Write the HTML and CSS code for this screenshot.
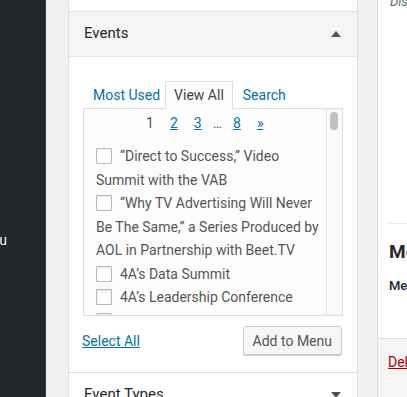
FILE: index.html
```html
<!DOCTYPE html>
<html>
<head>
  <title>Menus - Events</title>
  <link rel="stylesheet" href="styles.css">
</head>
<body>
  <div class="screen">
    <div class="adminmenu">
      <div class="menu-item">Menu</div>
    </div>

    <div class="side-column">
      <div class="accordion">
        <div class="section prev-section"></div>

        <div class="section open">
          <div class="section-title">
            <span>Events</span>
            <span class="arrow up"></span>
          </div>
          <div class="section-content">
            <ul class="tabs">
              <li class="tab"><a href="#">Most Used</a></li>
              <li class="tab active">View All</li>
              <li class="tab"><a href="#">Search</a></li>
            </ul>
            <div class="tabs-panel">
              <div class="panel-scroll">
                <div class="pagination">
                  <span class="current">1</span>
                  <a href="#">2</a>
                  <a href="#">3</a>
                  <span class="dots">…</span>
                  <a href="#">8</a>
                  <a href="#">»</a>
                </div>
                <ul class="checklist">
                  <li><span class="checkbox"></span>“Direct to Success,” Video Summit with the VAB</li>
                  <li><span class="checkbox"></span>“Why TV Advertising Will Never Be The Same,” a Series Produced by AOL in Partnership with Beet.TV</li>
                  <li><span class="checkbox"></span>4A’s Data Summit</li>
                  <li><span class="checkbox"></span>4A’s Leadership Conference</li>
                  <li><span class="checkbox"></span>4A’s Strategy Festival</li>
                </ul>
              </div>
              <div class="scrollbar"><div class="thumb"></div></div>
            </div>
            <div class="button-controls">
              <a href="#" class="select-all">Select All</a>
              <button class="button">Add to Menu</button>
            </div>
          </div>
        </div>

        <div class="section">
          <div class="section-title">
            <span>Event Types</span>
            <span class="arrow down"></span>
          </div>
        </div>
      </div>
    </div>

    <div class="main-column">
      <div class="menu-edit">
        <div class="edit-top">
          <div class="drag-hint">Dis</div>
        </div>
        <div class="menu-settings">
          <h3>Me</h3>
          <div class="settings-row">Me</div>
        </div>
        <div class="edit-footer">
          <a href="#" class="delete">Delete Menu</a>
        </div>
      </div>
    </div>
  </div>
</body>
</html>
```

FILE: styles.css
```css
body {
  margin: 0;
  background-color: #f1f1f1;
  font-family: Roboto, "Noto Sans", sans-serif;
  font-size: 14px;
  color: #444;
}

.screen {
  display: flex;
  height: 397px;
  overflow: hidden;
}

a {
  color: #0073aa;
}

/* admin sidebar */
.adminmenu {
  width: 45px;
  flex-shrink: 0;
  background-color: #23282d;
  border-right: 1px solid #32373c;
  overflow: hidden;
}

.menu-item {
  width: 80px;
  margin-left: -73px;
  margin-top: 232px;
  text-align: right;
  color: #eee;
  font-size: 14px;
}

/* left column with accordion */
.side-column {
  width: 290px;
  flex-shrink: 0;
  margin-left: 22px;
}

.accordion {
  border-left: 1px solid #ddd;
  border-right: 1px solid #ddd;
  background-color: #fff;
}

.section {
  border-bottom: 1px solid #ddd;
}

.prev-section {
  height: 11px;
  background-color: #fff;
}

.section-title {
  display: flex;
  align-items: center;
  justify-content: space-between;
  height: 44px;
  padding: 0 16px 0 15px;
  font-size: 15px;
  color: #23282d;
  background-color: #f5f5f5;
}

.open .section-title {
  border-bottom: 1px solid #e5e5e5;
}

.section-title span:first-child {
  margin-top: -3px;
}

.section:last-child .section-title {
  background-color: #fff;
}

.arrow {
  width: 0;
  height: 0;
  border-left: 5px solid transparent;
  border-right: 5px solid transparent;
}

.arrow.up {
  border-bottom: 6px solid #555;
}

.arrow.down {
  border-top: 6px solid #555;
}

.section-content {
  padding: 24px 14px 17px 14px;
}

/* tabs */
.tabs {
  display: flex;
  list-style: none;
  margin: 0;
  padding: 0;
}

.tab {
  padding: 4px 9px 4px 9px;
  font-size: 14px;
  line-height: 18px;
  border: 1px solid transparent;
  border-bottom: none;
}

.tab a {
  text-decoration: none;
}

.tab:first-child {
  padding-right: 4px;
}

.tab.active {
  background-color: #fdfdfd;
  border-color: #ddd;
  color: #444;
  margin-bottom: -1px;
  position: relative;
  z-index: 1;
  padding: 4px 8px 5px 8px;
}

.tabs-panel {
  display: flex;
  height: 206px;
  border: 1px solid #ddd;
  background-color: #fdfdfd;
  overflow: hidden;
}

.panel-scroll {
  flex: 1;
  padding: 6px 7px 0 12px;
}

.pagination {
  display: flex;
  gap: 16px;
  font-size: 14px;
  margin-bottom: 14px;
  padding-left: 50px;
}

.pagination .current,
.pagination .dots {
  color: #555;
}

.pagination .dots {
  margin: 0 -5px;
}

.checklist {
  list-style: none;
  margin: 0;
  padding: 0;
}

.checklist li {
  font-size: 14px;
  line-height: 23.5px;
  color: #555;
}

.checkbox {
  display: inline-block;
  width: 14px;
  height: 14px;
  border: 1px solid #b4b9be;
  border-radius: 1px;
  background-color: #fff;
  box-shadow: inset 0 1px 2px rgba(0, 0, 0, 0.1);
  vertical-align: -3px;
  margin-right: 8px;
}

.scrollbar {
  width: 15px;
  border-left: 1px solid #e8e8e8;
  background-color: #fafafa;
}

.thumb {
  width: 8px;
  height: 18px;
  margin: 3px 0 0 3px;
  border-radius: 4px;
  background-color: #c1c1c1;
}

.button-controls {
  display: flex;
  justify-content: space-between;
  align-items: center;
  margin-top: 10px;
}

.select-all {
  font-size: 14px;
  margin-left: -1px;
}

.button {
  font-family: inherit;
  font-size: 14px;
  color: #555;
  height: 29px;
  padding: 0 9px;
  background-color: #f7f7f7;
  border: 1px solid #ccc;
  border-radius: 3px;
  box-shadow: 0 1px 0 #ccc;
  margin-right: 1px;
}

/* right column */
.main-column {
  flex: 1;
  margin-left: 19px;
  min-width: 0;
}

.menu-edit {
  height: 397px;
  display: flex;
  flex-direction: column;
  border-left: 1px solid #ddd;
  background-color: #fff;
  white-space: nowrap;
}

.edit-top {
  height: 223px;
  border-bottom: 1px solid #eee;
  margin-left: 10px;
}

.drag-hint {
  font-style: italic;
  font-size: 13px;
  color: #666;
  margin-top: -6px;
  margin-left: 2px;
}

.menu-settings {
  flex: 1;
  padding-left: 11px;
}

.menu-settings h3 {
  margin: 16px 0 0 0;
  font-size: 19px;
  color: #23282d;
}

.settings-row {
  margin-top: 15px;
  font-size: 13px;
  font-weight: 500;
  color: #23282d;
}

.edit-footer {
  height: 43px;
  border-top: 1px solid #ddd;
  background-color: #f5f5f5;
  padding: 15px 0 0 10px;
}

.delete {
  color: #a00;
  font-size: 14px;
}
```
